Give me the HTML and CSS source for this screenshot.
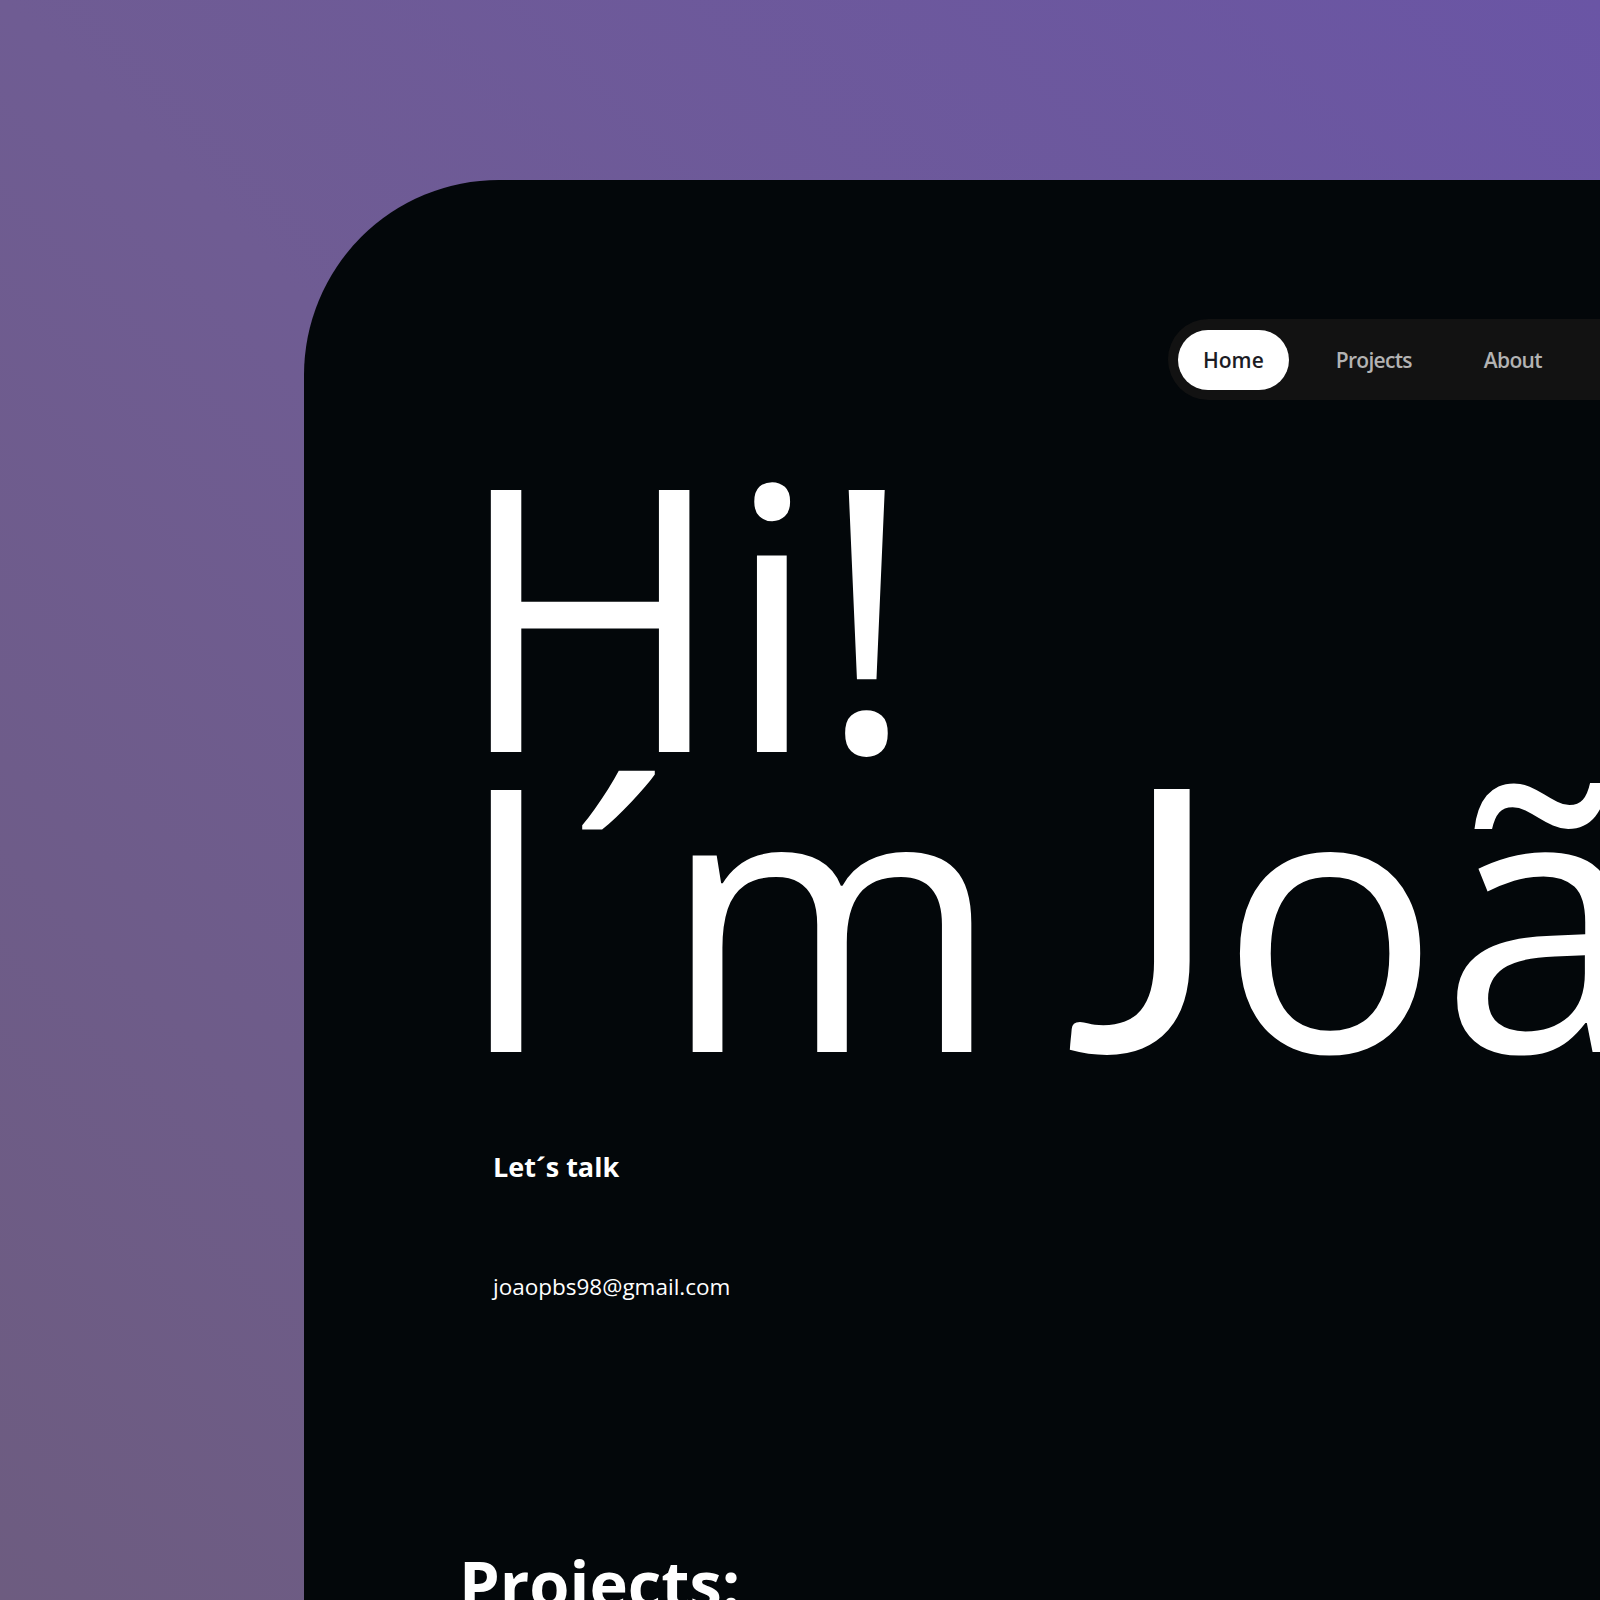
FILE: index.html
```html
<!DOCTYPE html>
<html lang="en">
<head>
<meta charset="utf-8">
<title>João</title>
<link rel="stylesheet" href="styles.css">
</head>
<body>
  <div class="page">
    <main class="card">
      <nav class="nav">
        <a class="nav-link is-active" href="#">Home</a>
        <a class="nav-link" href="#">Projects</a>
        <a class="nav-link" href="#">About</a>
        <a class="nav-link" href="#">Contact</a>
      </nav>
      <section class="hero">
        <h1 class="hero-title">Hi!<br>I<span class="acute">´</span>m <span class="cap-j">J</span><span class="name-rest">oão</span></h1>
        <p class="talk">Let´s talk</p>
        <a class="email" href="#">joaopbs98@gmail.com</a>
      </section>
      <section class="projects">
        <h2 class="projects-title">Projects:</h2>
      </section>
    </main>
  </div>
</body>
</html>
```

FILE: styles.css
```css
html, body {
  margin: 0;
  height: 100%;
  overflow: hidden;
}

body {
  background: linear-gradient(to top right, #6d5c80 0%, #6f5c93 50%, #6a55a5 100%);
  font-family: "Open Sans", "Noto Sans", sans-serif;
  color: #fff;
}

.page {
  padding: 180px 0 0 304px;
}

.card {
  width: 1600px;
  min-height: 1600px;
  background: #03070a;
  border-top-left-radius: 195px;
  padding-top: 139px;
  box-sizing: border-box;
}

.nav {
  display: flex;
  align-items: center;
  gap: 22px;
  margin-left: 864px;
  padding: 11px 40px 10px 10px;
  background: #121212;
  border-radius: 41px;
  width: max-content;
}

.nav-link {
  display: block;
  height: 60px;
  line-height: 60px;
  padding: 0 25px;
  border-radius: 30px;
  font-size: 21px;
  font-weight: 600;
  letter-spacing: -0.7px;
  color: #b3b3b3;
  text-decoration: none;
}

.nav-link.is-active {
  background: #fff;
  color: #1c1c24;
  letter-spacing: 0;
}

.hero {
  padding-left: 189px;
}

.hero-title {
  margin: 60px 0 0 -38px;
  font-size: 367px;
  line-height: 300px;
  font-weight: 400;
  white-space: nowrap;
}

.acute {
  margin-left: 10px;
  margin-right: -8px;
}

.cap-j {
  font-family: Lato, "Open Sans", sans-serif;
  margin-left: -31px;
}

.name-rest {
  margin-left: -1px;
}

.talk {
  margin: 88px 0 0 0;
  font-size: 27px;
  line-height: 38px;
  font-weight: 700;
}

.email {
  display: block;
  margin-top: 86px;
  font-size: 22.5px;
  line-height: 30px;
  color: #fff;
  text-decoration: none;
}

.projects {
  padding-left: 155px;
  margin-top: 251px;
}

.projects-title {
  margin: 0;
  font-size: 65px;
  line-height: 60px;
  font-weight: 700;
}
```
